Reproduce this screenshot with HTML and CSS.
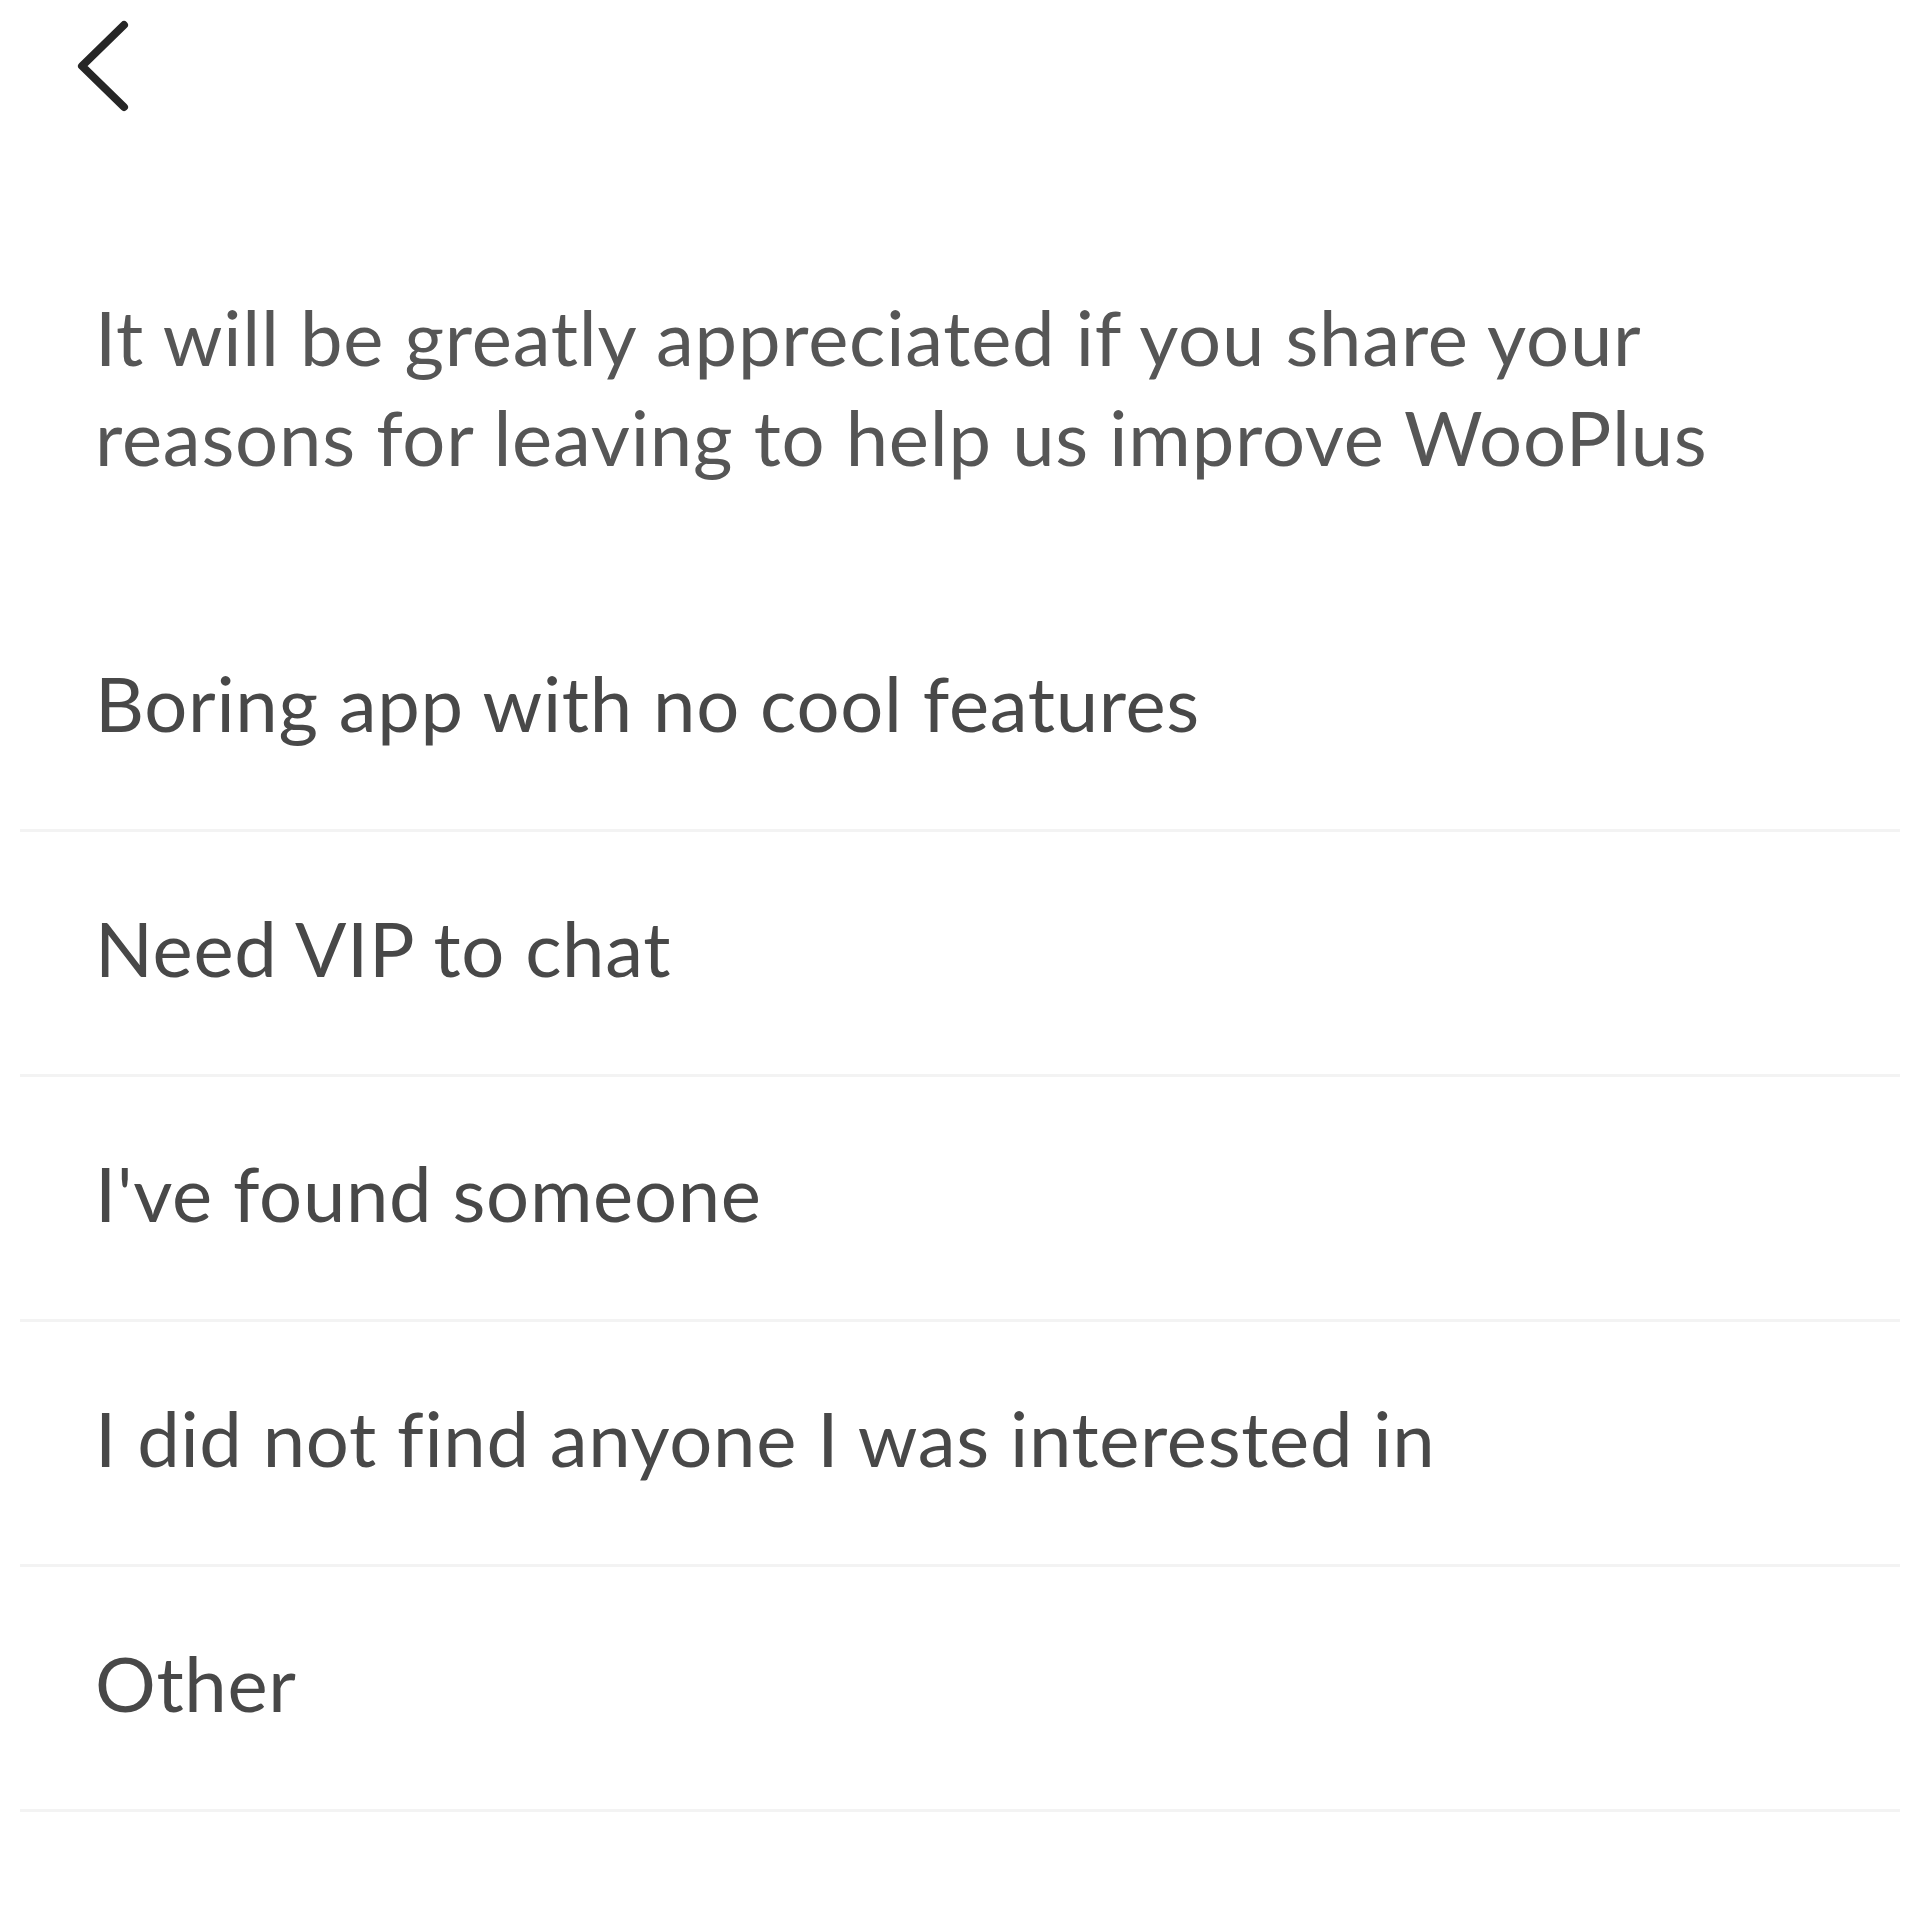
FILE: index.html
```html
<!DOCTYPE html>
<html lang="en">
<head>
  <meta charset="UTF-8">
  <meta name="viewport" content="width=device-width, initial-scale=1.0">
  <title>Delete Account - WooPlus</title>
  <link rel="stylesheet" href="styles.css">
</head>
<body>
  <div class="topbar">
    <div class="back-btn">
      <svg width="56" height="92" viewBox="0 0 56 92">
        <path d="M48 5 L6 46 L48 87" fill="none" stroke="#262626" stroke-width="8" stroke-linecap="round" stroke-linejoin="round"/>
      </svg>
    </div>
  </div>

  <p class="intro">It will be greatly appreciated if you share your reasons for leaving to help us improve WooPlus</p>

  <ul class="reasons">
    <li>Boring app with no cool features</li>
    <li>Need VIP to chat</li>
    <li>I've found someone</li>
    <li>I did not find anyone I was interested in</li>
    <li>Other</li>
  </ul>
</body>
</html>
```

FILE: styles.css
```css
body {
  margin: 0;
  background: #fff;
  font-family: Lato, "Noto Sans", sans-serif;
}

.topbar {
  padding: 20px 0 0 76px;
  height: 100px;
}

.back-btn {
  display: inline-block;
  cursor: pointer;
}

.intro {
  margin: 167px 0 100px;
  padding: 0 95px;
  max-width: 1700px;
  font-size: 76px;
  line-height: 100px;
  letter-spacing: 0.8px;
  color: #565656;
}

.reasons {
  list-style: none;
  margin: 0;
  padding: 0;
}

.reasons li {
  margin: 0 20px;
  padding: 0 0 12px 75px;
  height: 230px;
  display: flex;
  align-items: center;
  border-bottom: 3px solid #f3f3f3;
  font-size: 76px;
  letter-spacing: 0.7px;
  color: #484848;
  cursor: pointer;
}
```
